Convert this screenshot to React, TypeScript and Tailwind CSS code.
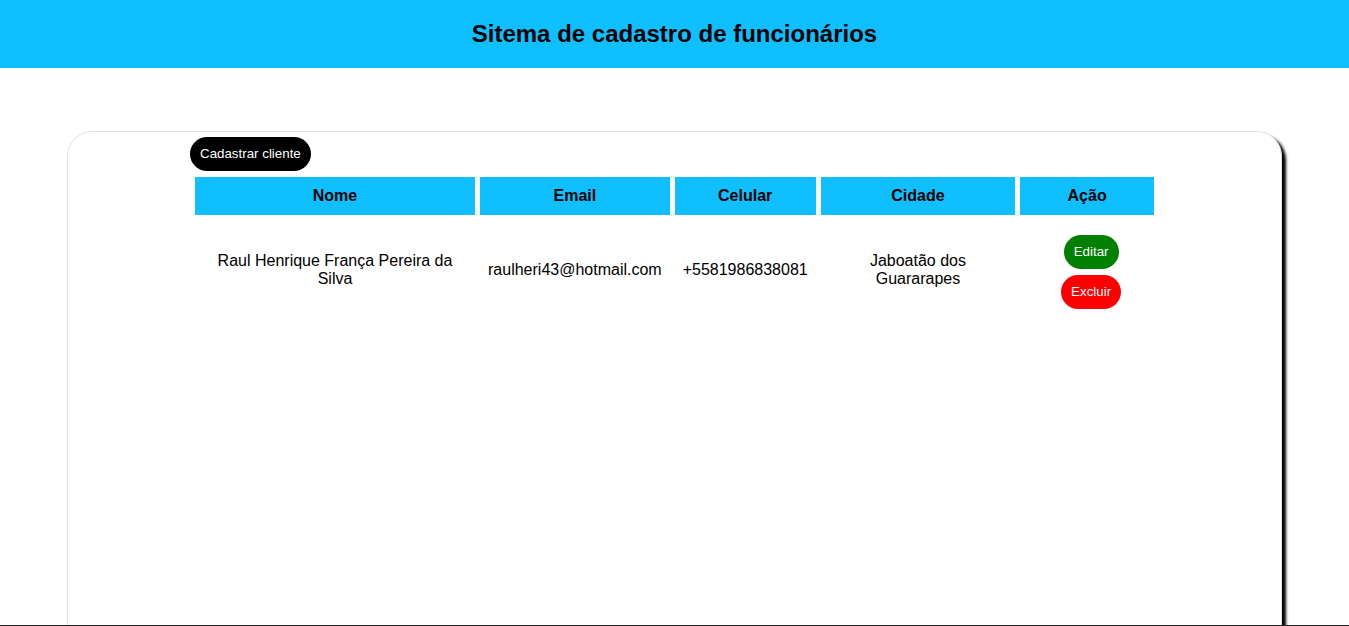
import React from 'react';

const columns = [
  { label: 'Nome', width: 'w-[281px]' },
  { label: 'Email', width: 'w-[189px]' },
  { label: 'Celular', width: 'w-[140px]' },
  { label: 'Cidade', width: 'w-[195px]' },
  { label: 'Ação', width: 'w-[134px]' },
];

const funcionarios = [
  {
    nome: 'Raul Henrique França Pereira da Silva',
    email: 'raulheri43@hotmail.com',
    celular: '+5581986838081',
    cidade: 'Jaboatão dos Guararapes',
  },
];

const App = () => {
  return (
    <div className="min-h-screen bg-white text-black font-['Liberation_Sans',Arial,sans-serif]">
      <header className="h-[68px] bg-[#0fbfff] flex items-center justify-center">
        <h1 className="text-[24px] font-bold">Sitema de cadastro de funcionários</h1>
      </header>

      <main className="h-[557px] overflow-hidden pt-[63px]">
        <div className="w-[90%] h-[600px] mx-auto bg-white border border-[#e2e2e2] rounded-[25px] shadow-[4px_4px_3px_#000]">
          <div className="w-[969px] mx-auto pt-[5px]">
            <button className="h-[34px] px-[10px] rounded-full bg-black text-white text-[13.33px]">
              Cadastrar cliente
            </button>
            <table className="table-fixed border-separate border-spacing-[5px] mt-[1px]">
              <thead>
                <tr>
                  {columns.map((col) => (
                    <th key={col.label} className={`${col.width} h-[38px] bg-[#0fbfff] text-[16px] font-bold text-center`}>
                      {col.label}
                    </th>
                  ))}
                </tr>
              </thead>
              <tbody>
                {funcionarios.map((f, i) => (
                  <tr key={i} className="text-[16px] text-center leading-[18px]">
                    <td className="px-[8px] pt-[15px] pb-[20px]">{f.nome}</td>
                    <td className="px-[8px] pt-[15px] pb-[20px]">{f.email}</td>
                    <td className="px-[8px] pt-[15px] pb-[20px]">{f.celular}</td>
                    <td className="px-[8px] pt-[15px] pb-[20px]">{f.cidade}</td>
                    <td className="px-[8px] py-[15px]">
                      <div className="flex flex-col items-center gap-[6px] pl-[8px]">
                        <button className="h-[34px] px-[10px] rounded-full bg-[#008000] text-white text-[13.33px]">
                          Editar
                        </button>
                        <button className="h-[34px] px-[10px] rounded-full bg-[#ff0000] text-white text-[13.33px]">
                          Excluir
                        </button>
                      </div>
                    </td>
                  </tr>
                ))}
              </tbody>
            </table>
          </div>
        </div>
      </main>
      <footer className="border-t border-[#222]" />
    </div>
  );
};

export default App;
